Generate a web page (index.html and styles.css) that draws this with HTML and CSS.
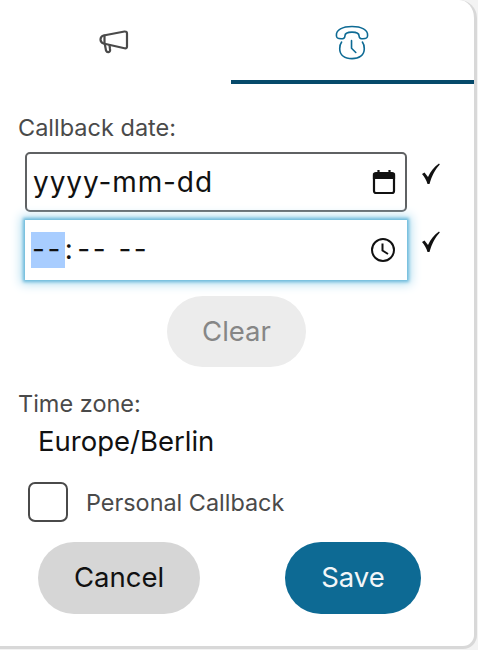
FILE: index.html
```html
<!DOCTYPE html>
<html lang="en">
<head>
  <meta charset="UTF-8" />
  <meta name="viewport" content="width=device-width, initial-scale=1" />
  <title>Callback</title>
  <link rel="stylesheet" href="styles.css">
</head>
<body>

  <div class="card">
    <div class="tabs">
      <div class="tab">
        <svg width="30" height="25" viewBox="0 0 30 25" fill="none" stroke="#4a4a4a" stroke-width="2.200" stroke-linejoin="round" stroke-linecap="round">
          <path d="M4.500 5.500 L25.500 1.500 Q28 1.300 28 3.500 L28 16.500 Q28 18.800 25.500 18.200 L4.500 13.500 Q1.500 12.300 1.500 9.500 Q1.500 6.500 4.500 5.500 Z" />
          <path d="M5.500 5.500 L5.500 13.500" />
          <path d="M5.800 14 L7 20.500 Q8 22.800 10 22 Q11.500 21.200 11 19 L10.500 15.200" />
        </svg>
      </div>
      <div class="tab tab-active">
        <svg width="34" height="36" viewBox="0 0 36 38" fill="none" stroke="#0d6a94" stroke-width="1.700" stroke-linecap="round" stroke-linejoin="round">
          <path d="M1.500 11 C1 5 8 1.500 18 1.500 C28 1.500 35 5 34.500 11 C34.500 14 33 14.500 29.500 14.500 C26.500 14.500 25.500 13.500 25.500 11.500 C25.500 8.500 22 7.500 18 7.500 C14 7.500 10.500 8.500 10.500 11.500 C10.500 13.500 9.500 14.500 6.500 14.500 C3 14.500 1.500 14 1.500 11 Z" />
          <path d="M7 18 C5.500 20 5 22.500 5 25 C5 32 10.500 35.500 18 35.500 C25.500 35.500 31 32 31 25 C31 22.500 30.500 20 29 18" />
          <path d="M17.500 16.500 L17.500 24.500 L22 29" />
        </svg>
      </div>
    </div>

    <div class="form">
      <div class="label">Callback date:</div>

      <div class="field-row field-row-first">
        <div class="field">
          <span class="field-text">yyyy-mm-dd</span>
          <svg class="field-icon" width="24" height="26" viewBox="0 0 24 26" fill="none" stroke="#111" stroke-width="2.200">
            <rect x="2" y="4" width="20" height="20" rx="2" />
            <path d="M2 5.500 H22 V9 H2 Z" fill="#111" />
            <path d="M6.500 1 V5 M17.500 1 V5" />
          </svg>
        </div>
        <svg class="check" width="20" height="22" viewBox="0 0 20 22" fill="#111">
          <path d="M1 11 L3.500 9.500 L7 14 C9.500 8.500 13 4 18 0.500 L18.800 1.500 C14 6.500 11 12.500 8.500 21 L6.500 21 C5.500 17 3.500 14 1 11 Z" />
        </svg>
      </div>

      <div class="field-row">
        <div class="field field-focus">
          <span class="field-text time-text"><span class="selected">--</span><span class="colon">:</span>-- --</span>
          <svg class="field-icon" width="26" height="26" viewBox="0 0 26 26" fill="none" stroke="#111" stroke-width="2">
            <circle cx="13" cy="13" r="11" />
            <path d="M12.500 6.500 V13.500 L18 17" />
          </svg>
        </div>
        <svg class="check" width="20" height="22" viewBox="0 0 20 22" fill="#111">
          <path d="M1 11 L3.500 9.500 L7 14 C9.500 8.500 13 4 18 0.500 L18.800 1.500 C14 6.500 11 12.500 8.500 21 L6.500 21 C5.500 17 3.500 14 1 11 Z" />
        </svg>
      </div>

      <div class="clear-row">
        <button class="btn btn-clear">Clear</button>
      </div>

      <div class="label zone-label">Time zone:</div>
      <div class="zone">Europe/Berlin</div>

      <div class="personal">
        <span class="checkbox"></span>
        <span class="personal-text">Personal Callback</span>
      </div>

      <div class="actions">
        <button class="btn btn-cancel">Cancel</button>
        <button class="btn btn-save">Save</button>
      </div>
    </div>
  </div>

</body>
</html>
```

FILE: styles.css
```css
body {
  margin: 0;
  font-family: Inter, 'Liberation Sans', sans-serif;
  background: #f3f3f3;
  height: 650px;
  overflow: hidden;
}

.card {
  width: 474px;
  height: 646px;
  background: #fff;
  border-right: 3px solid #d8d8d8;
  border-bottom: 3px solid #d8d8d8;
  border-radius: 0 18px 14px 0;
}

.tabs {
  display: flex;
  height: 84px;
}

.tab {
  width: 231px;
  height: 84px;
  box-sizing: border-box;
  display: flex;
  justify-content: center;
  padding-top: 30px;
  padding-right: 4px;
}

.tab-active {
  width: 243px;
  padding-top: 25px;
  padding-right: 2px;
  border-bottom: 4px solid #064a6b;
}

.form {
  padding: 32px 0 0 0;
}

.label {
  margin-left: 18px;
  font-size: 23.500px;
  line-height: 24px;
  color: #4a4a4a;
}

.field-row {
  display: flex;
  align-items: flex-start;
  margin: 8px 0 0 25px;
}

.field-row-first {
  margin-top: 12px;
}

.field {
  width: 382px;
  height: 60px;
  box-sizing: border-box;
  display: flex;
  align-items: center;
  justify-content: space-between;
  padding: 0 9px 0 6px;
  border: 2px solid #5f6163;
  border-radius: 5px;
  background: #fff;
}

.field-focus {
  border-color: #fff;
  border-radius: 0;
  box-shadow: 0 0 3px 2px #6dbbdc, 0 0 10px 4px #b5def0;
  padding-left: 5px;
}

.field-text {
  font-size: 28px;
  line-height: 34px;
  color: #111;
  letter-spacing: 0.9px;
}

.time-text {
  letter-spacing: 2.500px;
  white-space: pre;
}

.selected {
  background: #a8cdff;
  display: inline-block;
  height: 36px;
  margin-left: -1px;
  padding: 0 2px 0 1px;
}

.colon {
  margin-right: 2px;
}

.check {
  margin: 11px 0 0 14px;
}

.clear-row {
  display: flex;
  margin-top: 16px;
  padding-left: 167px;
}

.btn {
  border: none;
  border-radius: 36px;
  font-family: inherit;
  padding: 0 0 2px;
}

.btn-clear {
  width: 139px;
  height: 71px;
  background: #ececec;
  color: #868686;
  font-size: 27.500px;
}

.zone-label {
  margin-top: 25px;
}

.zone {
  margin: 10px 0 0 38px;
  font-size: 27.500px;
  line-height: 30px;
  color: #111;
}

.personal {
  display: flex;
  align-items: center;
  margin: 26px 0 0 28px;
}

.checkbox {
  width: 40px;
  height: 40px;
  box-sizing: border-box;
  border: 2px solid #4a4a4a;
  border-radius: 7px;
}

.personal-text {
  margin-left: 18px;
  font-size: 23.400px;
  color: #4a4a4a;
}

.actions {
  display: flex;
  gap: 85px;
  margin: 20px 0 0 38px;
}

.btn-cancel {
  width: 162px;
  height: 72px;
  background: #d6d6d6;
  color: #111;
  font-size: 27.500px;
}

.btn-save {
  width: 136px;
  height: 72px;
  background: #0d6a94;
  color: #f2f6f8;
  font-size: 27.500px;
}
```
